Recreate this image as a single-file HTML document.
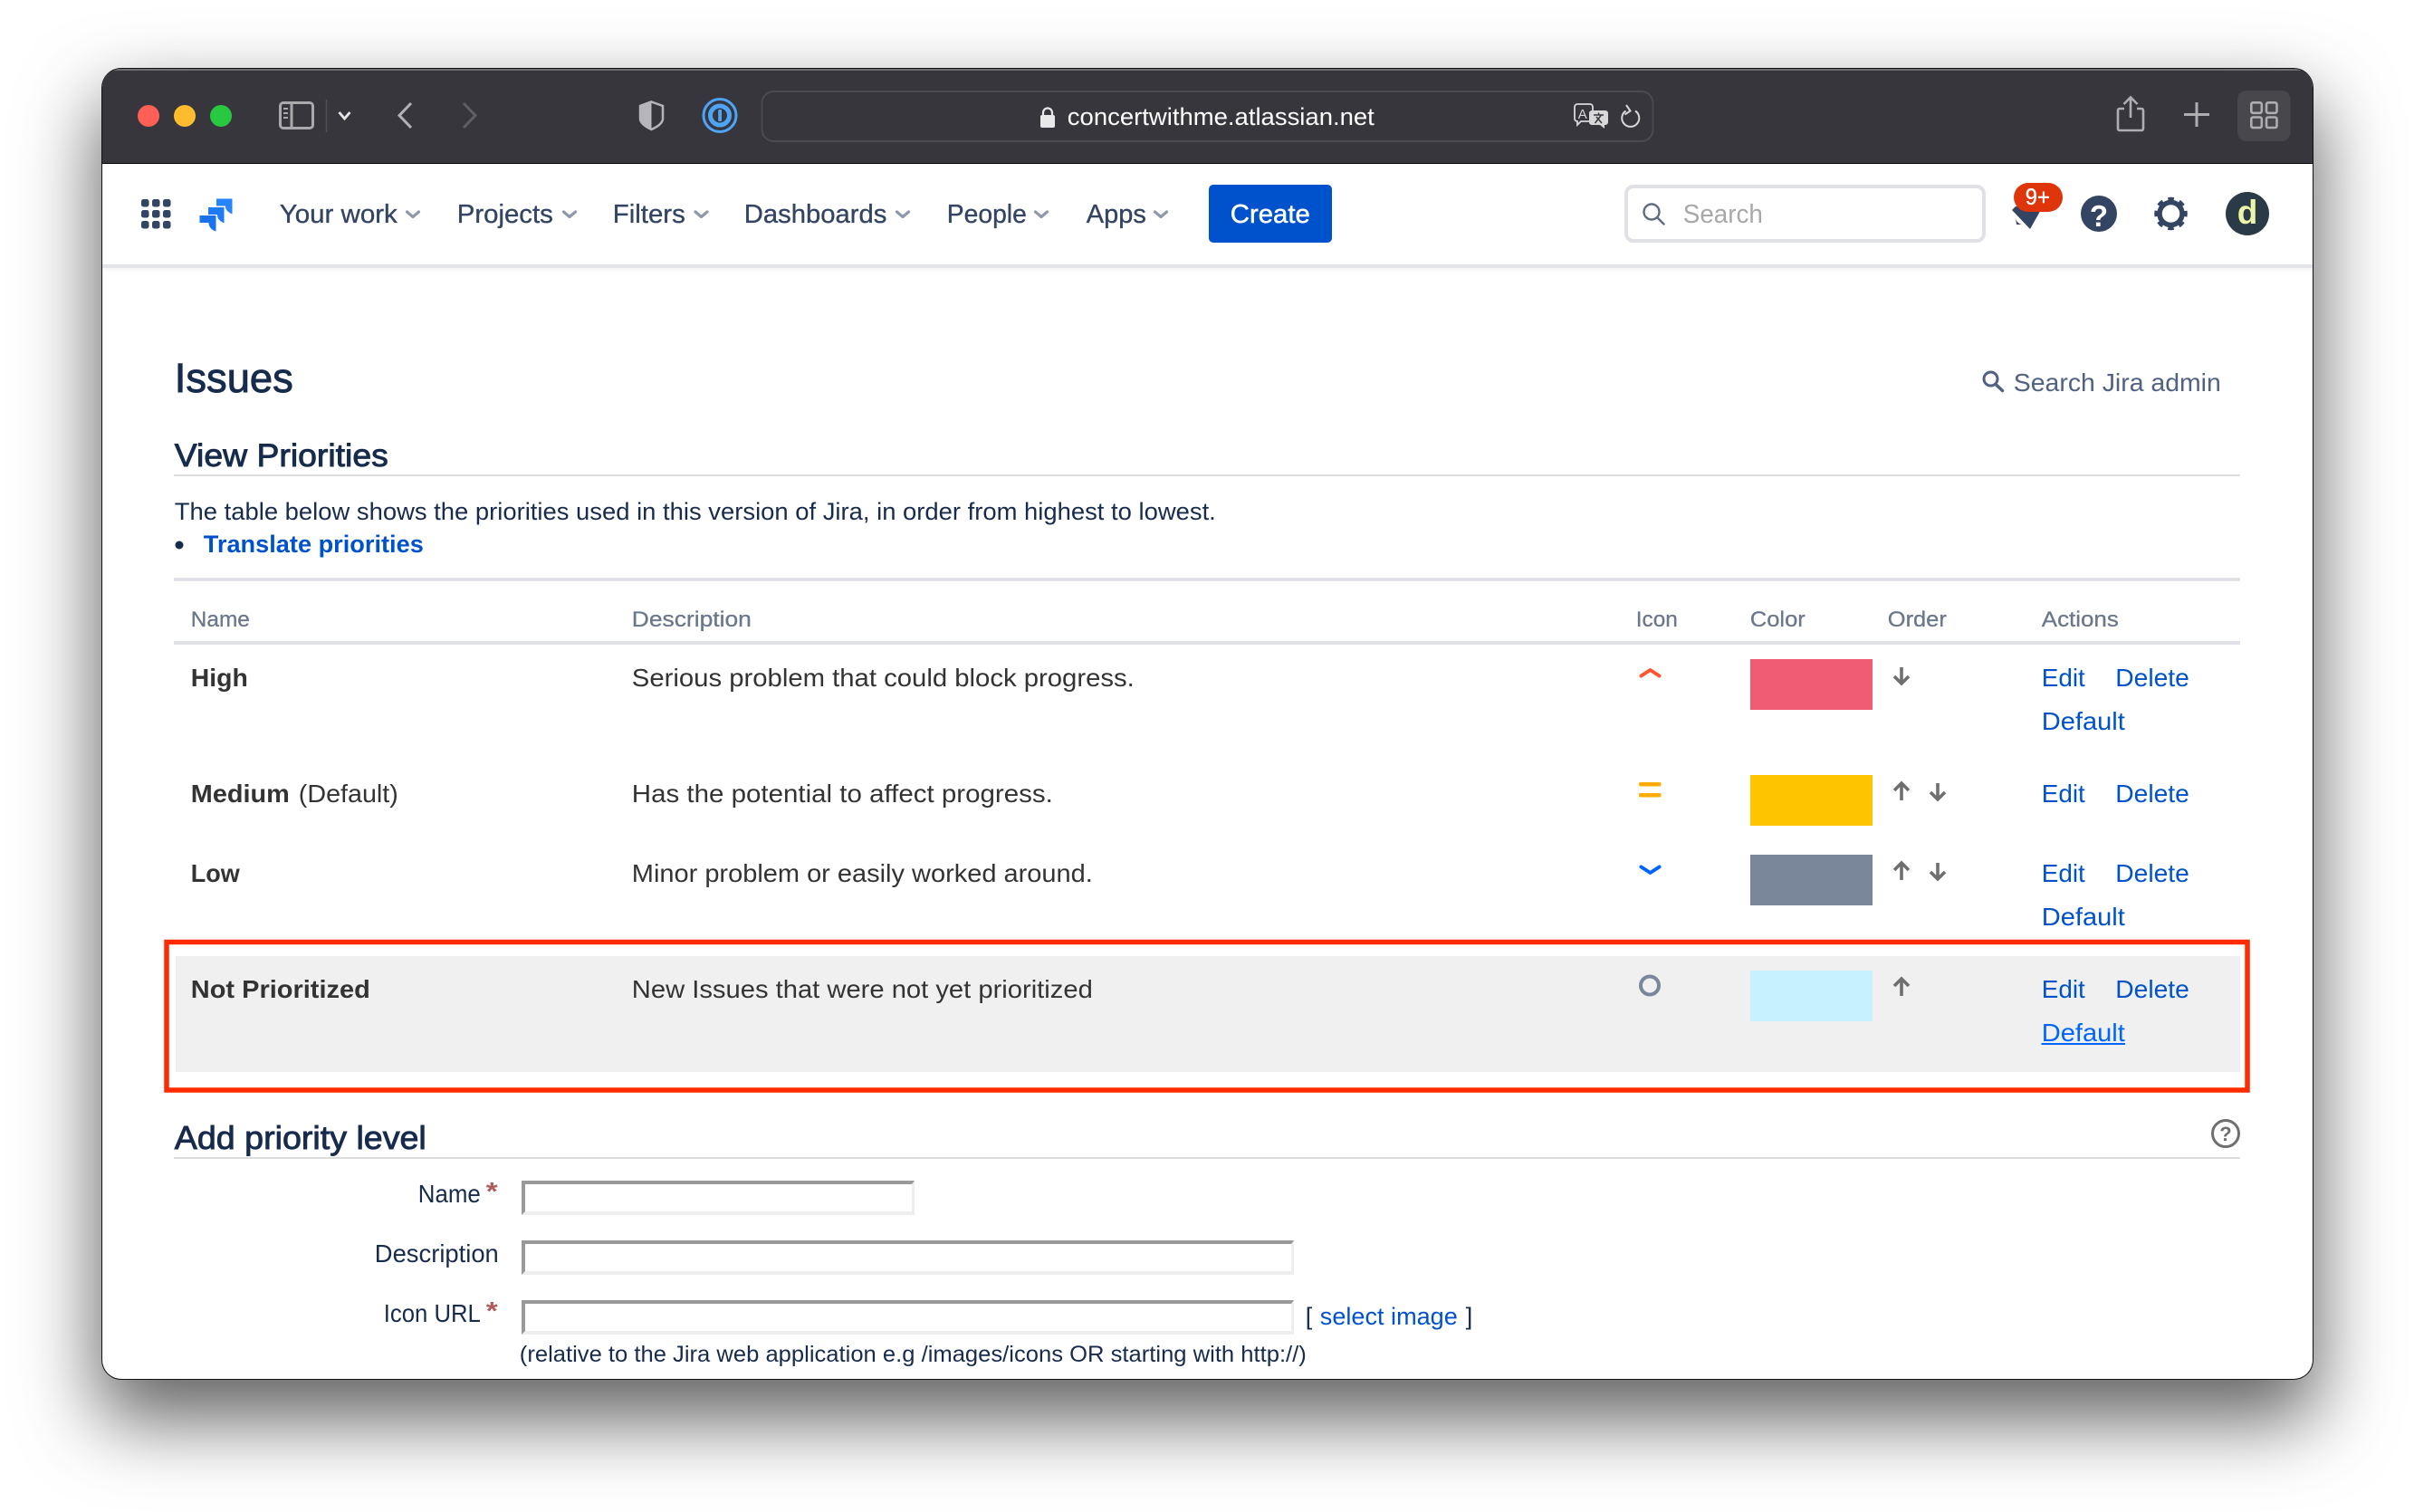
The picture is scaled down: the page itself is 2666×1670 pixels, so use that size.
<!DOCTYPE html>
<html lang="en">
<head>
<meta charset="utf-8">
<title>Issues - View Priorities</title>
<style>
html,body{margin:0;padding:0;background:#fff;width:2666px;height:1670px;overflow:hidden}
.win{position:absolute;left:112.500px;top:76px;width:2441px;height:1446.500px;border-radius:21px;background:#fff;box-shadow:0 0 0 1px #111,0 40px 85px 5px rgba(0,0,0,.62)}
.clip{position:absolute;inset:0;border-radius:21px;overflow:hidden}
.title{position:absolute;left:0;top:0;right:0;height:105px;background:#37363d;border-top:2px solid #6e6e73;box-sizing:border-box;border-bottom:1.5px solid #000}
.navline{position:absolute;left:0;right:0;top:216px;height:4px;background:#e4e5e9}
.navfade{position:absolute;left:0;right:0;top:220px;height:6px;background:linear-gradient(#f5f6f8,#fff)}
svg.o{position:absolute;left:0;top:0}
input{position:absolute;box-sizing:border-box;border-style:solid;border-width:4px 3px 4px 4px;border-color:#999 #eee #eee #999;background:#fff;padding:0;margin:0;border-radius:0;outline:0}
text{font-family:"Liberation Sans",sans-serif;font-size:28px;transform:translateX(-.2px)}
.nav{fill:#344563;font-size:29px;stroke:#344563;stroke-width:.35px}
.h{fill:#6b778c;font-size:24px;stroke:#6b778c;stroke-width:.3px}
.t{fill:#333}
.b{fill:#333;font-weight:700}
.l{fill:#0052cc}
.d{fill:#172b4d}
.hd{fill:#172b4d;stroke:#172b4d;stroke-width:.9px}
</style>
</head>
<body>
<div class="win">
  <div class="clip">
    <div class="title"></div>
    <div class="navline"></div>
    <div class="navfade"></div>
  </div>
</div>

<svg class="o" width="2666" height="1670" viewBox="0 0 2666 1670" xmlns="http://www.w3.org/2000/svg">
  <!-- traffic lights -->
  <circle cx="164" cy="128" r="12" fill="#ff5f57"/>
  <circle cx="204" cy="128" r="12" fill="#febc2e"/>
  <circle cx="244" cy="128" r="12" fill="#28c840"/>

  <!-- sidebar -->
  <rect x="309.5" y="113.5" width="36" height="28" rx="3.5" fill="none" stroke="#aaaaad" stroke-width="3"/>
  <path d="M322 113v28" stroke="#aaaaad" stroke-width="3"/>
  <path d="M313 120h5M313 125h5M313 130h5" stroke="#aaaaad" stroke-width="2"/>
  <path d="M360.5 110v36" stroke="#4d4d52" stroke-width="1.5"/>
  <path d="M374.500 124l6 7 6-7" fill="none" stroke="#e6e6e6" stroke-width="2.800"/>
  <path d="M454 114l-13 13.500 13 13.500" fill="none" stroke="#b2b2b5" stroke-width="3"/>
  <path d="M512 114l13 13.500-13 13.500" fill="none" stroke="#5f5f63" stroke-width="3"/>

  <!-- shield -->
  <path d="M719.500 112.500l12.500 4.500v14c0 5-6 9-12.500 12-6.500-3-12.500-7-12.500-12v-14z" fill="none" stroke="#b5b5ba" stroke-width="2.500"/>
  <path d="M719.500 111l-13.500 5v15c0 5.500 6.500 10 13.500 13z" fill="#b5b5ba"/>

  <!-- 1password -->
  <circle cx="795" cy="127.500" r="18" fill="none" stroke="#4ea5f8" stroke-width="3"/>
  <circle cx="795" cy="127.500" r="10.500" fill="none" stroke="#4ea5f8" stroke-width="5"/>
  <rect x="793.200" y="121" width="3.800" height="13" rx="1" fill="#4ea5f8"/>

  <!-- url bar -->
  <rect x="841.500" y="101" width="984" height="55" rx="13" fill="none" stroke="#4b4b50" stroke-width="2"/>
  <rect x="1149" y="127" width="16" height="14" rx="2" fill="#e8e8e8"/>
  <path d="M1152 128v-3.500a5 5 0 0 1 10 0v3.500" fill="none" stroke="#e8e8e8" stroke-width="2.200"/>
  <text x="1179" y="138" textLength="339" lengthAdjust="spacingAndGlyphs" fill="#fff" style="font-size:27px">concertwithme.atlassian.net</text>

  <!-- translate -->
  <path d="M1742 115h14a3 3 0 0 1 3 3v13a3 3 0 0 1-3 3h-10l-4 4v-4a3 3 0 0 1-3-3v-13a3 3 0 0 1 3-3z" fill="#37363d" stroke="#d8d8d8" stroke-width="1.800"/>
  <text x="1743" y="131" style="font-size:15px" fill="#d8d8d8">A</text>
  <path d="M1758 122h15a3 3 0 0 1 3 3v10a3 3 0 0 1-3 3h-1v4l-5-4h-9a3 3 0 0 1-3-3v-10a3 3 0 0 1 3-3z" fill="#d8d8d8"/>
  <path d="M1760 127h11M1765.500 124.500v3M1761.500 136l7-9M1769 136l-6-7" stroke="#37363d" stroke-width="1.500" fill="none"/>

  <!-- reload -->
  <path d="M1806 122.500a9.500 9.500 0 1 1-10.500 0" fill="none" stroke="#d8d8d8" stroke-width="2"/>
  <path d="M1796 116l4.500 6.500-6 4" fill="none" stroke="#d8d8d8" stroke-width="2"/>

  <!-- share -->
  <path d="M2346 120h-5a2 2 0 0 0-2 2v20a2 2 0 0 0 2 2h24a2 2 0 0 0 2-2v-20a2 2 0 0 0-2-2h-5" fill="none" stroke="#aeaeb1" stroke-width="2.600"/>
  <path d="M2353 108v22M2345.500 115l7.500-7.500 7.500 7.500" fill="none" stroke="#aeaeb1" stroke-width="2.600"/>
  <!-- plus -->
  <path d="M2426 113v27M2412 126.500h28" stroke="#aeaeb1" stroke-width="3"/>
  <!-- tabs -->
  <rect x="2471" y="100" width="58.500" height="56" rx="10" fill="#47474c"/>
  <g fill="none" stroke="#aeaeb1" stroke-width="2.600">
    <rect x="2486.300" y="113.300" width="11.500" height="11.500" rx="2"/>
    <rect x="2503" y="113.300" width="11.500" height="11.500" rx="2"/>
    <rect x="2486.300" y="129.500" width="11.500" height="11.500" rx="2"/>
    <rect x="2503" y="129.500" width="11.500" height="11.500" rx="2"/>
  </g>

  <!-- app grid -->
  <g fill="#344563">
    <rect x="156" y="220" width="8.500" height="8.500" rx="2.500"/><rect x="168" y="220" width="8.500" height="8.500" rx="2.500"/><rect x="180" y="220" width="8.500" height="8.500" rx="2.500"/>
    <rect x="156" y="232" width="8.500" height="8.500" rx="2.500"/><rect x="168" y="232" width="8.500" height="8.500" rx="2.500"/><rect x="180" y="232" width="8.500" height="8.500" rx="2.500"/>
    <rect x="156" y="244" width="8.500" height="8.500" rx="2.500"/><rect x="168" y="244" width="8.500" height="8.500" rx="2.500"/><rect x="180" y="244" width="8.500" height="8.500" rx="2.500"/>
  </g>

  <!-- jira logo -->
  <path d="M220.500 238h18v17.500c-5-1.500-8-5-8-9.500h-10z" fill="#1a73ee"/>
  <path d="M229.500 228.500h18.500v18.500c-5-1.500-8.500-5-8.500-9.500h-10z" fill="#1f7af5" stroke="#fff" stroke-width="1"/>
  <path d="M238.500 219h18.500v18c-5-1.500-8.500-5-8.500-9h-10z" fill="#2684ff" stroke="#fff" stroke-width="1"/>

  <!-- nav -->
  <text class="nav" x="309" y="246" textLength="130" lengthAdjust="spacingAndGlyphs">Your work</text>
  <text class="nav" x="505" y="246" textLength="106" lengthAdjust="spacingAndGlyphs">Projects</text>
  <text class="nav" x="677" y="246" textLength="80" lengthAdjust="spacingAndGlyphs">Filters</text>
  <text class="nav" x="822" y="246" textLength="157.500" lengthAdjust="spacingAndGlyphs">Dashboards</text>
  <text class="nav" x="1046" y="246" textLength="88" lengthAdjust="spacingAndGlyphs">People</text>
  <text class="nav" x="1200" y="246" textLength="66" lengthAdjust="spacingAndGlyphs">Apps</text>
  <g fill="none" stroke="#8f99aa" stroke-width="3.200" stroke-linecap="round" stroke-linejoin="round">
    <path d="M449.500 234l6.500 5.500 6.500-5.500"/>
    <path d="M622.500 234l6.500 5.500 6.500-5.500"/>
    <path d="M768 234l6.500 5.500 6.500-5.500"/>
    <path d="M990.500 234l6.500 5.500 6.500-5.500"/>
    <path d="M1143.500 234l6.500 5.500 6.500-5.500"/>
    <path d="M1275.500 234l6.500 5.500 6.500-5.500"/>
  </g>

  <!-- create -->
  <rect x="1335" y="204" width="136" height="64" rx="5" fill="#0052cc"/>
  <text x="1359" y="246" textLength="88" lengthAdjust="spacingAndGlyphs" fill="#fff" stroke="#fff" stroke-width=".5" style="font-size:29px">Create</text>

  <!-- search -->
  <rect x="1796" y="206" width="395" height="60" rx="8" fill="#fff" stroke="#dfe1e6" stroke-width="4"/>
  <circle cx="1824" cy="234" r="8.500" fill="none" stroke="#5e6c84" stroke-width="2.400"/>
  <path d="M1831 241l6.500 6.500" stroke="#5e6c84" stroke-width="2.400" stroke-linecap="round"/>
  <text x="1859" y="246" textLength="88" lengthAdjust="spacingAndGlyphs" fill="#a8a8a8" style="font-size:29px">Search</text>

  <!-- bell + badge -->
  <path d="M2222 232l4-4h30l-14 25z" fill="#344563"/>
  <path d="M2226 241c1 4 3 6 7 7l-6 0z" fill="#344563"/>
  <rect x="2224" y="202" width="54" height="32" rx="16" fill="#de350b"/>
  <text x="2237" y="226" textLength="27" lengthAdjust="spacingAndGlyphs" fill="#fff" stroke="#fff" stroke-width=".4" style="font-size:25px">9+</text>

  <!-- help -->
  <circle cx="2318" cy="236" r="20" fill="#344563"/>
  <text x="2318.200" y="250" text-anchor="middle" fill="#fff" style="font-size:33px;font-weight:700">?</text>

  <!-- gear -->
  <circle cx="2397.500" cy="236" r="12.500" fill="none" stroke="#344563" stroke-width="5.500"/>
  <circle cx="2397.500" cy="236" r="16" fill="none" stroke="#344563" stroke-width="4.500" stroke-dasharray="6.300 6.266" stroke-dashoffset="3.150"/>

  <!-- avatar -->
  <circle cx="2482" cy="236" r="24" fill="#2a3a46"/>
  <text x="2482.200" y="247" text-anchor="middle" fill="#edf5a8" style="font-size:37px;font-weight:700">d</text>

  <!-- page head -->
  <text class="hd" x="193" y="433" textLength="131" lengthAdjust="spacingAndGlyphs" style="font-size:45px">Issues</text>
  <circle cx="2198.500" cy="418.500" r="7.500" fill="none" stroke="#4f6282" stroke-width="3"/>
  <path d="M2204 424.500l7.500 7" stroke="#4f6282" stroke-width="3.500" stroke-linecap="round"/>
  <text x="2224" y="432" textLength="229" lengthAdjust="spacingAndGlyphs" fill="#4f6282" style="font-size:28px">Search Jira admin</text>

  <text class="hd" x="193" y="515" textLength="236" lengthAdjust="spacingAndGlyphs" style="font-size:35px">View Priorities</text>
  <rect x="192" y="524" width="2282" height="2" fill="#dcdcdc"/>

  <text class="d" x="193" y="574" textLength="1150" lengthAdjust="spacingAndGlyphs" style="font-size:27px">The table below shows the priorities used in this version of Jira, in order from highest to lowest.</text>
  <circle cx="198" cy="602" r="4.500" fill="#172b4d"/>
  <text x="225" y="610" textLength="243" lengthAdjust="spacingAndGlyphs" fill="#0052cc" style="font-size:27px;font-weight:700">Translate priorities</text>

  <rect x="192" y="638" width="2282" height="4" fill="#dfe1e6"/>

  <text class="h" x="211" y="692" textLength="65" lengthAdjust="spacingAndGlyphs">Name</text>
  <text class="h" x="698" y="692" textLength="132" lengthAdjust="spacingAndGlyphs">Description</text>
  <text class="h" x="1807" y="692" textLength="46" lengthAdjust="spacingAndGlyphs">Icon</text>
  <text class="h" x="1933" y="692" textLength="61" lengthAdjust="spacingAndGlyphs">Color</text>
  <text class="h" x="2085" y="692" textLength="65" lengthAdjust="spacingAndGlyphs">Order</text>
  <text class="h" x="2255" y="692" textLength="85" lengthAdjust="spacingAndGlyphs">Actions</text>
  <rect x="192" y="708" width="2282" height="4" fill="#dfe1e6"/>

  <!-- highlight row -->
  <rect x="194" y="1056" width="2280" height="128" fill="#f0f0f0"/>

  <!-- rows -->
  <text class="b" x="211" y="758" textLength="63" lengthAdjust="spacingAndGlyphs">High</text>
  <text class="t" x="698" y="758" textLength="555" lengthAdjust="spacingAndGlyphs">Serious problem that could block progress.</text>

  <text class="b" x="211" y="886" textLength="109" lengthAdjust="spacingAndGlyphs">Medium</text>
  <text class="t" x="330" y="886" textLength="110" lengthAdjust="spacingAndGlyphs">(Default)</text>
  <text class="t" x="698" y="886" textLength="465" lengthAdjust="spacingAndGlyphs">Has the potential to affect progress.</text>

  <text class="b" x="211" y="974" textLength="54" lengthAdjust="spacingAndGlyphs">Low</text>
  <text class="t" x="698" y="974" textLength="509" lengthAdjust="spacingAndGlyphs">Minor problem or easily worked around.</text>

  <text class="b" x="211" y="1102" textLength="198" lengthAdjust="spacingAndGlyphs">Not Prioritized</text>
  <text class="t" x="698" y="1102" textLength="509" lengthAdjust="spacingAndGlyphs">New Issues that were not yet prioritized</text>

  <!-- priority icons -->
  <path d="M1812.500 746.500l10-6.500 10 6.500" fill="none" stroke="#ff5630" stroke-width="4" stroke-linecap="round" stroke-linejoin="round"/>
  <rect x="1810" y="864" width="24.500" height="4.500" rx="2" fill="#ffab00"/>
  <rect x="1810" y="876" width="24.500" height="4.500" rx="2" fill="#ffab00"/>
  <path d="M1812.500 957.500l10 6.500 10-6.500" fill="none" stroke="#0065ff" stroke-width="4" stroke-linecap="round" stroke-linejoin="round"/>
  <circle cx="1822" cy="1088.500" r="10" fill="none" stroke="#7a869a" stroke-width="4"/>

  <!-- swatches -->
  <rect x="1933" y="728" width="135" height="56" fill="#f15c75"/>
  <rect x="1933" y="856" width="135" height="56" fill="#ffc400"/>
  <rect x="1933" y="944" width="135" height="56" fill="#7a869a"/>
  <rect x="1933" y="1072" width="135" height="56" fill="#c7f1ff"/>

  <!-- order arrows -->
  <g fill="none" stroke="#6f6f6f" stroke-width="3.600">
    <path d="M2100 737v18M2092 747l8 8 8-8"/>
    <path d="M2100 884v-18M2092 873l8-8 8 8"/>
    <path d="M2140 865v18M2132 875l8 8 8-8"/>
    <path d="M2100 972v-18M2092 961l8-8 8 8"/>
    <path d="M2140 953v18M2132 963l8 8 8-8"/>
    <path d="M2100 1100v-18M2092 1089l8-8 8 8"/>
  </g>

  <!-- actions -->
  <g class="l">
    <text class="l" x="2255" y="758" textLength="48" lengthAdjust="spacingAndGlyphs">Edit</text>
    <text class="l" x="2336.500" y="758" textLength="81.500" lengthAdjust="spacingAndGlyphs">Delete</text>
    <text class="l" x="2255" y="806" textLength="92" lengthAdjust="spacingAndGlyphs">Default</text>
    <text class="l" x="2255" y="886" textLength="48" lengthAdjust="spacingAndGlyphs">Edit</text>
    <text class="l" x="2336.500" y="886" textLength="81.500" lengthAdjust="spacingAndGlyphs">Delete</text>
    <text class="l" x="2255" y="974" textLength="48" lengthAdjust="spacingAndGlyphs">Edit</text>
    <text class="l" x="2336.500" y="974" textLength="81.500" lengthAdjust="spacingAndGlyphs">Delete</text>
    <text class="l" x="2255" y="1022" textLength="92" lengthAdjust="spacingAndGlyphs">Default</text>
    <text class="l" x="2255" y="1102" textLength="48" lengthAdjust="spacingAndGlyphs">Edit</text>
    <text class="l" x="2336.500" y="1102" textLength="81.500" lengthAdjust="spacingAndGlyphs">Delete</text>
  </g>
  <text x="2255" y="1150" textLength="92" lengthAdjust="spacingAndGlyphs" fill="#0065ff">Default</text>
  <rect x="2254.500" y="1152" width="92.500" height="2" fill="#0065ff"/>

  <!-- red box -->
  <rect x="184" y="1040.500" width="2298" height="163.500" fill="none" stroke="#ff2a00" stroke-width="5.500"/>

  <!-- add priority -->
  <text class="hd" x="193" y="1269" textLength="278" lengthAdjust="spacingAndGlyphs" style="font-size:36px">Add priority level</text>
  <rect x="192" y="1278" width="2282" height="2" fill="#dcdcdc"/>
  <circle cx="2458" cy="1252" r="14.500" fill="none" stroke="#6f6f6f" stroke-width="3"/>
  <text x="2458.200" y="1260" text-anchor="middle" fill="#6f6f6f" style="font-size:22px;font-weight:700">?</text>

  <text class="d" x="462" y="1328" textLength="69" lengthAdjust="spacingAndGlyphs">Name</text>
  <text x="537" y="1325" fill="#b05a5a" style="font-size:28px;font-weight:700" textLength="13" lengthAdjust="spacingAndGlyphs">*</text>
  <text class="d" x="414" y="1394" textLength="137" lengthAdjust="spacingAndGlyphs">Description</text>
  <text class="d" x="424" y="1460" textLength="107" lengthAdjust="spacingAndGlyphs">Icon URL</text>
  <text x="537" y="1457" fill="#b05a5a" style="font-size:28px;font-weight:700" textLength="13" lengthAdjust="spacingAndGlyphs">*</text>

  <text class="d" x="1442" y="1463" style="font-size:27px">[</text>
  <text class="l" x="1458" y="1463" textLength="152" lengthAdjust="spacingAndGlyphs" style="font-size:27px">select image</text>
  <text class="d" x="1619" y="1463" style="font-size:27px">]</text>
  <text class="d" x="574" y="1504" textLength="869" lengthAdjust="spacingAndGlyphs" style="font-size:25px">(relative to the Jira web application e.g /images/icons OR starting with http://)</text>
</svg>

<input type="text" style="left:576px;top:1304px;width:434px;height:38px">
<input type="text" style="left:576px;top:1370px;width:853px;height:38px">
<input type="text" style="left:576px;top:1436px;width:853px;height:38px">
</body>
</html>
